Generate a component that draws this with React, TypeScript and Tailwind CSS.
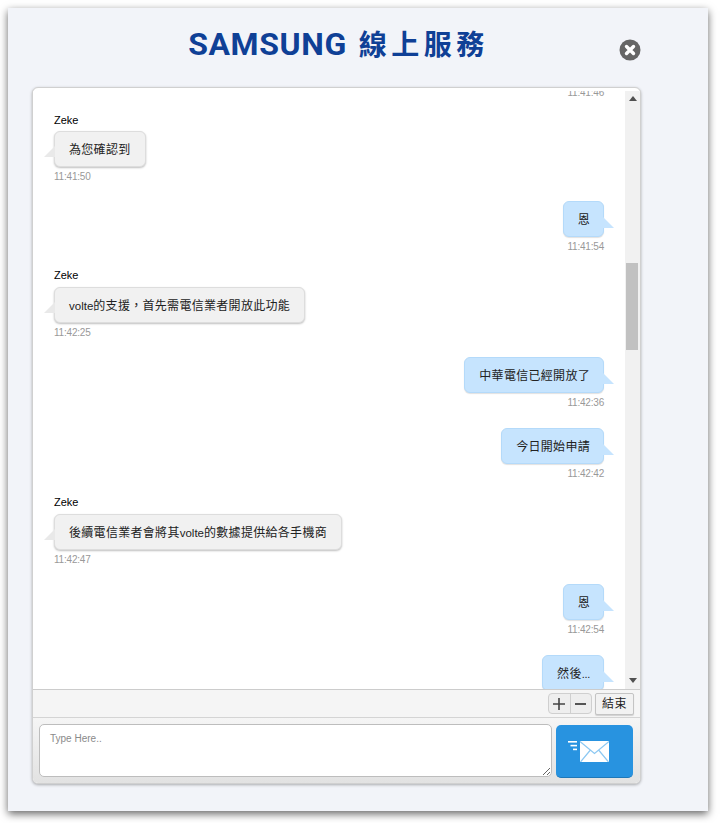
import type { ReactNode } from 'react';

const font = "[font-family:'Liberation_Sans','Noto_Sans_CJK_TC',sans-serif]";

type Msg = { side: 'l' | 'r'; text: ReactNode; time: string; top: string; nameGap?: string };

const Latin = ({ children }: { children: ReactNode }) => <span className="text-[11.5px] tracking-[0]">{children}</span>;

const messages: Msg[] = [
  { side: 'l', text: '為您確認到', time: '11:41:50', top: 'mt-[15px]', nameGap: 'mb-[4px]' },
  { side: 'r', text: '恩', time: '11:41:54', top: 'mt-[19px]' },
  { side: 'l', text: <><Latin>volte</Latin>{'的支援\uFF0C首先需電信業者開放此功能'}</>, time: '11:42:25', top: 'mt-[16px]', nameGap: 'mb-[5px]' },
  { side: 'r', text: '中華電信已經開放了', time: '11:42:36', top: 'mt-[19px]' },
  { side: 'r', text: '今日開始申請', time: '11:42:42', top: 'mt-[20px]' },
  { side: 'l', text: <>後續電信業者會將其<Latin>volte</Latin>的數據提供給各手機商</>, time: '11:42:47', top: 'mt-[16px]', nameGap: 'mb-[5px]' },
  { side: 'r', text: '恩', time: '11:42:54', top: 'mt-[19px]' },
  { side: 'r', text: <>然後<span className="text-[11px] tracking-[-0.3px]">...</span></>, time: '', top: 'mt-[20px]' },
];

function Bubble({ m }: { m: Msg }) {
  const left = m.side === 'l';
  return (
    <div className={`relative h-[36px] shrink-0 flex items-center pt-[2px] pl-[14px] rounded-[6px] border text-[12px] tracking-[0.3px] text-[#222] ${left ? 'pr-[14px] bg-[#f1f1f1] border-[#dddddd] shadow-[0_1px_2px_rgba(0,0,0,0.25)]' : 'pr-[13px] bg-[#c6e4fe] border-[#b4dafa] shadow-[0_1px_1px_rgba(0,0,0,0.12)]'}`}>
      <span>{m.text}</span>
      {left ? (
        <span className="absolute left-[-11px] top-[14px] w-[11px] h-[11px] bg-[#e9e9e9] [clip-path:polygon(100%_0,0_100%,100%_100%)]" />
      ) : (
        <span className="absolute right-[-11px] top-[15px] w-[11px] h-[11px] bg-[#c6e4fe] [clip-path:polygon(0_0,100%_100%,0_100%)]" />
      )}
    </div>
  );
}

function Message({ m }: { m: Msg }) {
  const left = m.side === 'l';
  return (
    <div className={`flex flex-col ${m.top} ${left ? 'items-start' : 'items-end'}`}>
      {left && <div className={`h-[14px] leading-[14px] text-[11px] font-medium text-black ${m.nameGap}`}>Zeke</div>}
      <Bubble m={m} />
      {m.time && <div className="mt-[5px] h-[10px] leading-[10px] text-[10px] tracking-[-0.2px] text-[#999]">{m.time}</div>}
    </div>
  );
}

export default function App() {
  return (
    <div className={`w-[720px] h-[823px] bg-white pt-[8px] pl-[8px] ${font}`}>
      <div className="w-[700px] h-[803px] bg-[#f2f4f9] pl-[24px] shadow-[0_3px_8px_rgba(0,0,0,0.6)]">
        <div className="relative w-[609px] h-[79px] flex items-start justify-center pt-[18px]">
          <div className="flex items-center gap-[12px] h-[34px] text-[#0f4096]">
            <span className="[font-family:Roboto,sans-serif] font-bold text-[32px] leading-[34px] mt-[1px] tracking-[0.6px]">SAMSUNG</span>
            <span className="[font-family:'Noto_Sans_CJK_TC',sans-serif] font-bold text-[28px] leading-[34px] tracking-[4.5px] mr-[-4px]">線上服務</span>
          </div>
          <button className="absolute right-0 top-[31px] w-[22px] h-[22px] flex items-center justify-center">
            <svg width="22" height="22" viewBox="0 0 22 22">
              <circle cx="11" cy="11" r="10.5" fill="#666666" />
              <path d="M7.5 7.5 14.5 14.5M14.5 7.5 7.5 14.5" stroke="#ffffff" strokeWidth="3.4" strokeLinecap="round" />
            </svg>
          </button>
        </div>

        <div className="w-[609px] h-[697px] flex flex-col bg-white border border-[#d0d0d0] rounded-[6px] shadow-[0_1px_3px_rgba(0,0,0,0.3)] overflow-hidden">
          <div className="h-[598px] mt-[3px] flex shrink-0 bg-white">
            <div className="flex-1 min-w-0 h-full overflow-hidden pl-[21px] pr-[21px]">
              <div className="-mt-[3px] flex flex-col">
                <div className="self-end h-[10px] leading-[10px] text-[10px] tracking-[-0.2px] text-[#999]">11:41:46</div>
                {messages.map((m, i) => (
                  <Message key={i} m={m} />
                ))}
              </div>
            </div>
            <div className="w-[15px] h-full bg-[#f1f1f1] flex flex-col items-center shrink-0">
              <svg className="mt-[5px] shrink-0" width="8" height="5" viewBox="0 0 8 5"><path d="M4 0 8 5H0Z" fill="#505050" /></svg>
              <div className="mt-[162px] w-[12px] h-[87px] bg-[#c1c1c1] shrink-0 self-start ml-[1px]" />
              <svg className="mt-auto mb-[6px] shrink-0" width="8" height="5" viewBox="0 0 8 5"><path d="M0 0H8L4 5Z" fill="#505050" /></svg>
            </div>
          </div>

          <div className="h-[28px] shrink-0 bg-[#f5f5f5] border-t border-[#cccccc] flex items-center justify-end gap-[3px] pr-[6px]">
            <div className="flex h-[21px] w-[44px] rounded-[4px] border border-[#cfcfcf] bg-[#eeeeee] text-[#333]">
              <div className="flex-1 flex items-center justify-center border-r border-[#cfcfcf]">
                <svg width="12" height="12" viewBox="0 0 12 12"><path d="M6 0V12M0 6H12" stroke="#444" strokeWidth="1.6" /></svg>
              </div>
              <div className="flex-1 flex items-center justify-center">
                <svg width="11" height="2" viewBox="0 0 11 2"><path d="M0 1H11" stroke="#555" strokeWidth="2" /></svg>
              </div>
            </div>
            <button className="w-[39px] h-[22px] border border-[#c4c4c4] rounded-[2px] bg-[#f2f2f2] text-[12px] tracking-[0.5px] text-[#222] flex items-center justify-center shadow-[0_1px_1px_rgba(0,0,0,0.15)]">結束</button>
          </div>

          <div className="flex-1 border-t border-[#d4d4d4] bg-gradient-to-b from-[#f5f5f5] to-[#e2e2e2] flex items-start pl-[6px] pt-[6px] gap-[4px]">
            <textarea
              placeholder="Type Here.."
              className="w-[513px] h-[53px] bg-white border border-[#bdbdbd] rounded-[5px] px-[10px] py-[7px] text-[10px] leading-[13px] outline-none placeholder:text-[#8a8a8a]"
            />
            <button className="w-[77px] h-[53px] mt-[1px] rounded-[5px] bg-[#2893e0] border-b border-[#1f78b8] flex items-center justify-center">
              <svg className="mr-[12px]" width="41" height="21" viewBox="0 0 41 21" fill="none">
                <rect x="0" y="0" width="9" height="1.6" fill="#ffffff" />
                <rect x="2.5" y="3.8" width="6.5" height="1.6" fill="#ffffff" />
                <rect x="5" y="7.6" width="4" height="1.6" fill="#ffffff" />
                <rect x="12" y="0" width="29" height="21" fill="#ffffff" />
                <path d="M12 0.5 26.5 12.5 41 0.5M12.5 21 22 9.5M40.5 21 31 9.5" stroke="#8cc8f2" strokeWidth="1.2" />
              </svg>
            </button>
          </div>
        </div>
      </div>
    </div>
  );
}
